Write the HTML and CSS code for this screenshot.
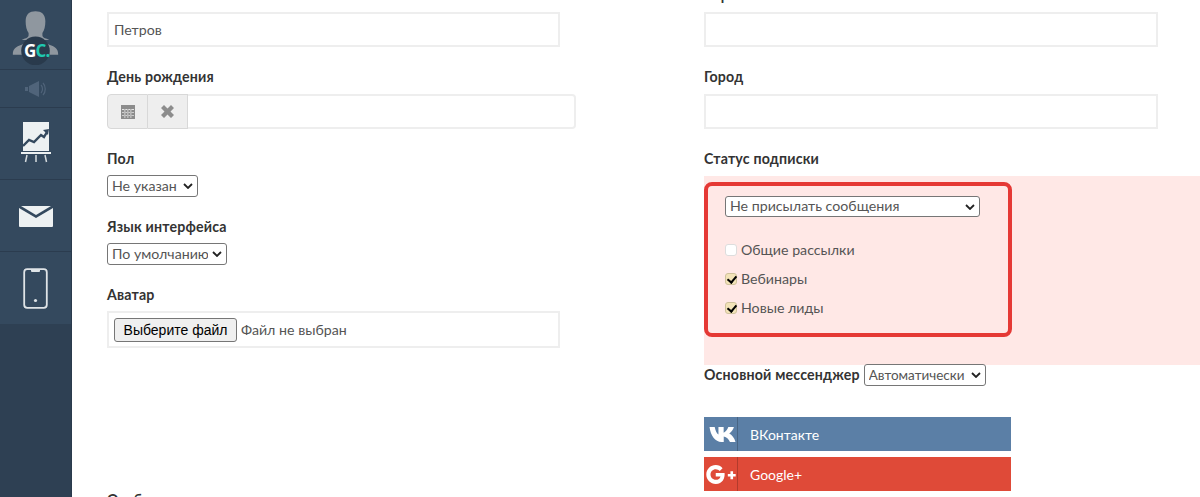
FILE: index.html
```html
<!DOCTYPE html>
<html lang="ru">
<head>
<meta charset="utf-8">
<title>Профиль</title>
<link rel="stylesheet" href="styles.css">
</head>
<body>
<div class="app">
  <nav class="sidebar">
    <div class="nav-item nav-logo">
      <svg width="72" height="69" viewBox="0 0 72 69">
        <path d="M26 21c0-7 4-10 10-10s10 3 10 10c0 5-1 9-3 12v2c0 2 1 3 5 4l2 1H22l2-1c4-1 5-2 5-4v-2c-2-3-3-7-3-12z" fill="#8f979f"/>
        <path d="M13 55c0-6 3-8 9-10l5-3h18l5 3c6 2 9 4 9 10z" fill="#8f979f"/>
        <circle cx="36" cy="51" r="14.500" fill="#293a4c"/>
      </svg>
      <span class="logo-text">G<span class="logo-c">C.</span></span>
    </div>
    <div class="nav-item nav-sound">
      <svg width="24" height="18" viewBox="0 0 24 18">
        <path d="M1 7h3v4H1zM5 6l10-5v16L5 12z" fill="#50647a"/>
        <path d="M17 5c2 2 2 6 0 8M19 3c3 3 3 9 0 12" fill="none" stroke="#50647a" stroke-width="1.2"/>
      </svg>
    </div>
    <div class="nav-item nav-tall nav-chart">
      <svg width="30" height="42" viewBox="0 0 30 42">
        <path d="M2 1h26v29H2z" fill="#edf1f2"/>
        <path d="M0 31h30v2H0z" fill="#edf1f2"/>
        <path d="M6 34l-1.500 7M15 34v7M24 34l1.500 7" stroke="#d5dbde" stroke-width="1.500"/>
        <path d="M2 25l6-6 5 2 7-7 3 2 3-5" fill="none" stroke="#34495e" stroke-width="2.400"/>
        <path d="M22 9l6-1-1 6z" fill="#34495e"/>
      </svg>
    </div>
    <div class="nav-item nav-tall nav-mail">
      <svg width="36" height="22" viewBox="0 0 36 22">
        <path d="M1 2l17 10L35 2v18a1 1 0 0 1-1 1H2a1 1 0 0 1-1-1z" fill="#edf1f2"/>
        <path d="M3 0h30L18 9z" fill="#edf1f2"/>
      </svg>
    </div>
    <div class="nav-item nav-tall">
      <svg width="25" height="41" viewBox="0 0 25 41">
        <rect x="1.200" y="1.200" width="22.600" height="38.600" rx="3" fill="none" stroke="#dfe4e7" stroke-width="1.800"/>
        <path d="M8 1h9v2a1 1 0 0 1-1 1H9a1 1 0 0 1-1-1z" fill="#dfe4e7"/>
        <circle cx="12.500" cy="32.500" r="1.600" fill="#dfe4e7"/>
      </svg>
    </div>
  </nav>
  <main class="form">
    <section class="col col-left">
      <div class="field">
        <label class="label label-text">Фамилия</label>
        <input class="text" type="text" value="Петров">
      </div>
      <div class="field">
        <label class="label label-text">День рождения</label>
        <div class="date">
          <span class="date-btn">
            <svg width="14" height="15" viewBox="0 0 14 15"><path d="M0 1h14v14H0z" fill="#8c8c8c"/><path d="M1 5h12v1H1zM1 8h12v.8H1zM1 11h12v.8H1zM3.500 5v9h.8V5zM6.500 5v9h.8V5zM9.500 5v9h.8V5z" fill="#e4e4e4"/></svg>
          </span>
          <span class="date-btn">
            <svg width="13" height="13" viewBox="0 0 13 13"><path d="M3 0l3.500 3.500L10 0l3 3-3.500 3.500L13 10l-3 3-3.500-3.500L3 13l-3-3 3.500-3.500L0 3z" fill="#8c8c8c"/></svg>
          </span>
          <input class="date-input" type="text">
        </div>
      </div>
      <div class="field">
        <label class="label">Пол</label>
        <select class="select select-sex"><option>Не указан</option></select>
      </div>
      <div class="field">
        <label class="label">Язык интерфейса</label>
        <select class="select select-lang"><option>По умолчанию</option></select>
      </div>
      <div class="field field-file">
        <label class="label">Аватар</label>
        <div class="file"><button class="file-btn" type="button">Выберите файл</button><span class="file-note">Файл не выбран</span></div>
      </div>
      <div class="field">
        <label class="label">Особые отметки</label>
      </div>
    </section>
    <section class="col col-right">
      <div class="field">
        <label class="label label-text">Страна</label>
        <input class="text" type="text">
      </div>
      <div class="field">
        <label class="label label-text">Город</label>
        <input class="text" type="text">
      </div>
      <div class="field field-sub">
        <label class="label label-text">Статус подписки</label>
        <div class="sub-band">
          <div class="sub-box">
            <select class="select select-wide"><option>Не присылать сообщения</option></select>
            <label class="check check-first"><input class="box" type="checkbox" disabled>Общие рассылки</label>
            <label class="check"><input class="box" type="checkbox" checked>Вебинары</label>
            <label class="check"><input class="box" type="checkbox" checked>Новые лиды</label>
          </div>
        </div>
      </div>
      <div class="messenger">
        <span class="label label-inline">Основной мессенджер</span>
        <select class="select select-msg"><option>Автоматически</option></select>
      </div>
      <a class="social social-vk">
        <span class="social-icon"><svg class="icon-vk" width="27" height="15" viewBox="0 0 26 16" preserveAspectRatio="none"><path d="M.5 0h5c.6 4 2 7 3.600 8V0h5v6c2-1 3.500-3 4.500-6H24c-.8 3-2.500 5.500-4.500 7 2.500 1.500 5 4.500 6 9h-5.300c-1-3-3-5.500-6-6v6H12C6 16 1.500 9 .5 0z" fill="#fff"/></svg></span>
        <span class="social-name">ВКонтакте</span>
      </a>
      <a class="social social-gp">
        <span class="social-icon"><svg width="32" height="21" viewBox="0 0 30 20"><path d="M15.500 4l-2.700 2.700C11.800 5.700 10.500 5 9 5 6.200 5 4 7.200 4 10s2.200 5 5 5c2.400 0 4-1.200 4.500-3.200H9V8.500h8.400c.5 4.800-1.900 10.500-8.400 10.500-5 0-9-4-9-9s4-9 9-9c2.700 0 4.900 1 6.500 3z" fill="#fff" transform="translate(1 0)"/><path d="M24 7h2.500v2.500H29v2.500h-2.500v2.500H24V12h-2.500V9.500H24z" fill="#fff"/></svg></span>
        <span class="social-name">Google+</span>
      </a>
    </section>
  </main>
</div>
</body>
</html>
```
FILE: styles.css
```css
* { box-sizing: border-box; }
html, body { margin: 0; height: 100%; overflow: hidden; background: #fff; }
body { font-family: "Lato", "Open Sans", "Liberation Sans", sans-serif; font-size: 14.2px; color: #555; }
.app { display: flex; height: 497px; overflow: hidden; }

.sidebar { width: 72px; flex: none; background: #2e4053; border-right: 1px solid #2a3a4c; display: flex; flex-direction: column; }
.nav-item { background: #34495e; border-bottom: 1px solid #2b3c4f; display: flex; align-items: center; justify-content: center; width: 71px; }
.nav-logo { height: 70px; position: relative; }
.logo-text { position: absolute; left: 24px; top: 41px; font-family: "Open Sans", sans-serif; font-weight: 700; font-size: 17px; line-height: 20px; color: #fff; letter-spacing: -.8px; }
.logo-c { color: #1fc8b0; }
.nav-sound { height: 38px; }
.nav-tall { height: 72px; }
.nav-chart { padding-bottom: 4px; }
.nav-mail { padding-top: 2px; }
.nav-item:last-child { border-bottom: 0; }

.form { flex: 1; display: flex; padding-left: 35px; gap: 144px; margin-top: -15px; align-items: flex-start; min-width: 0; }
.col { width: 453px; flex: none; }
.col-right { width: 454px; }

.field { margin-bottom: 20px; }
.label { display: block; font-weight: 700; line-height: 20px; height: 26px; color: #333; letter-spacing: .18px; }
.label-text { height: 27px; }
.text { display: block; width: 100%; height: 35px; border: 2px solid #eee; background: #fff; padding: 0 5px; font: inherit; color: #555; outline: 0; }

.date { display: flex; width: 469px; height: 35px; }
.date-btn { width: 40px; flex: none; display: flex; align-items: center; justify-content: center; background: #eee; border: 1px solid #d8d8d8; border-left-width: 0; }
.date-btn:first-child { width: 41px; border-left-width: 1px; border-radius: 4px 0 0 4px; }
.date-input { flex: 1; min-width: 0; border: 2px solid #eee; border-left: 0; border-radius: 0 4px 4px 0; outline: 0; }

.select { display: block; appearance: none; height: 22px; font: inherit; line-height: 20px; color: #555; background: #fff url("data:image/svg+xml,%3Csvg xmlns='http://www.w3.org/2000/svg' width='10' height='6' viewBox='0 0 10 6'%3E%3Cpath d='M1 1l4 4 4-4' fill='none' stroke='%23222' stroke-width='1.800'/%3E%3C/svg%3E") no-repeat right 4px center; border: 1px solid #767676; border-radius: 3px; padding: 0 18px 0 4px; }
.select-sex { width: 91px; }
.select-lang { width: 120px; }
.select-msg { width: 122px; padding-right: 14px; font-size: 13.5px; }
.select-wide { width: 255px; height: 21px; line-height: 17px; padding-bottom: 2px; }

.file { height: 37px; border: 2px solid #eee; display: flex; align-items: center; padding-left: 5px; }
.file-btn { height: 24px; width: 123px; padding: 0; font-family: "Liberation Sans", Arial, sans-serif; font-size: 14px; color: #000; background: #efefef; border: 1px solid #767676; border-radius: 3px; }
.file-note { margin-left: 4px; color: #555; }
.field-file { margin-bottom: 142px; }

.field-sub { margin-bottom: -1px; }
.sub-band { width: 496px; height: 189px; padding-top: 6px; background: #ffe8e6; }
.sub-box { width: 308px; height: 155px; border: 4px solid #e53935; border-radius: 8px; padding: 10px 17px 0; }
.check { display: flex; align-items: center; height: 29px; color: #555; }
.check-first { margin-top: 18px; }
.box { appearance: none; position: relative; width: 12px; height: 12px; margin: 0 4px 0 0; flex: none; background: #f3e3b8; border: 1px solid #cfc29c; border-radius: 3px; }
.box:disabled { background: #fff; border-color: #ddd; }
.box:checked::after { content: ""; position: absolute; left: 3px; top: 0; width: 4px; height: 7px; border: solid #000; border-width: 0 2px 2px 0; transform: rotate(40deg); }

.messenger { display: flex; align-items: center; gap: 4px; height: 22px; margin-bottom: 31px; }
.label-inline { height: auto; }
.social { display: flex; width: 307px; height: 34px; margin-bottom: 6px; color: #fff; font-size: 14px; align-items: center; }
.social-vk { background: #5b7fa6; }
.social-gp { background: #df4a38; }
.social-icon { width: 34px; height: 100%; flex: none; display: flex; align-items: center; justify-content: center; border-right: 1px solid rgba(0,0,0,.2); }
.icon-vk { margin-left: 3px; }
.social-name { margin-left: 12px; }
```
